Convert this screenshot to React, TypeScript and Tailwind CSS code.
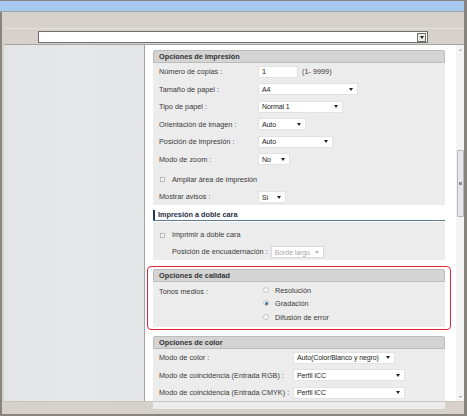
import React from "react";

function Arrow({ light }: { light?: boolean }) {
  return (
    <svg width="4" height="3" viewBox="0 0 4 3" className="shrink-0">
      <path d="M0 0h4L2 3z" fill={light ? "#b8b8b8" : "#222"} />
    </svg>
  );
}

function Select({ w, text, disabled }: { w: string; text: string; disabled?: boolean }) {
  return (
    <div
      className={`${w} h-[12px] bg-white border flex items-center justify-between pl-[3px] pr-[4px] text-[7px] tracking-[-0.1px] ${
        disabled ? "border-[#d8d8d8] text-[#a8a8a8]" : "border-[#e2e2e2] text-[#222]"
      }`}
    >
      <span className="whitespace-nowrap">{text}</span>
      <Arrow light={disabled} />
    </div>
  );
}

function Checkbox() {
  return <span className="w-[5px] h-[5px] border border-[#b9b9b9] bg-[#f4f4f4] shrink-0" />;
}

function Radio({ checked }: { checked?: boolean }) {
  return (
    <span className="w-[6px] h-[6px] rounded-full border border-[#c4c4c4] bg-[#f6f6f6] flex items-center justify-center shrink-0">
      {checked && <span className="w-[3px] h-[3px] rounded-full bg-[#3c6a96]" />}
    </span>
  );
}

function PanelHeader({ title }: { title: string }) {
  return (
    <div className="h-[13px] bg-[#d4d4d4] border border-[#bcbcbc] rounded-t-[2px] flex items-center pl-[5px] font-bold text-[#333]">
      {title}
    </div>
  );
}

function Row({ label, h, children, lw = "w-[99px]" }: { label: string; h: string; children?: React.ReactNode; lw?: string }) {
  return (
    <div className={`${h} flex items-center`}>
      <span className={`${lw} shrink-0 whitespace-nowrap`}>{label}</span>
      {children}
    </div>
  );
}

export default function App() {
  return (
    <div
      className="w-[467px] h-[416px] flex flex-col bg-[#d6d2cb] border-l-2 border-r-[3px] border-t border-b-2 border-[#87847f] text-[7.3px] leading-none text-[#3a3a3a]"
      style={{ fontFamily: '"Liberation Sans", Arial, sans-serif' }}
    >
      {/* title strip */}
      <div className="h-[11px] bg-[#a9caf0] border-b border-[#9aa3ad] ml-[-2px]" />

      {/* toolbar */}
      <div className="h-[32px] pl-[2px] flex flex-col">
        <div className="h-[17px] border-b border-[#e3e0da]" />
        <div className="ml-[34px] mt-[2px] w-[390px] h-[12px] bg-white border border-[#6f6f6f] flex items-center justify-end pr-[1px]">
          <div className="w-[9px] h-[9px] border border-[#6f6f6f] bg-[#ece9e4] flex items-center justify-center">
            <Arrow />
          </div>
        </div>
      </div>

      {/* main */}
      <div className="h-[357px] ml-[2px] flex border-t border-[#a7a4a0]">
        <div className="w-[141px] bg-gradient-to-r from-[#e2e4e6] via-[#e6e7e9] to-[#e3e5e7] border-r border-[#a3a3a3]" />

        <div className="flex-1 bg-white flex">
          <div className="w-[292px] ml-[8px] pt-[5px]">
            {/* Opciones de impresión */}
            <PanelHeader title="Opciones de impresión" />
            <div className="bg-[#ececec] pl-[6px] pb-[2px]">
              <Row label="Número de copias :" h="h-[17.5px]">
                <div className="w-[40px] h-[12px] bg-white border border-[#e2e2e2] pl-[3px] flex items-center text-[#222]">1</div>
                <span className="ml-[4px]">(1- 9999)</span>
              </Row>
              <Row label="Tamaño de papel :" h="h-[17.5px]">
                <Select w="w-[100px]" text="A4" />
              </Row>
              <Row label="Tipo de papel :" h="h-[17.5px]">
                <Select w="w-[85px]" text="Normal 1" />
              </Row>
              <Row label="Orientación de imagen :" h="h-[17.5px]">
                <Select w="w-[48px]" text="Auto" />
              </Row>
              <Row label="Posición de impresión :" h="h-[17.5px]">
                <Select w="w-[75px]" text="Auto" />
              </Row>
              <Row label="Modo de zoom :" h="h-[17.5px]">
                <Select w="w-[32px]" text="No" />
              </Row>
              <div className="h-[23px] flex items-center pl-[1px] gap-[7px]">
                <Checkbox />
                <span>Ampliar área de impresión</span>
              </div>
              <Row label="Mostrar avisos :" h="h-[12px]">
                <Select w="w-[28px]" text="Sí" />
              </Row>
            </div>

            {/* Impresión a doble cara */}
            <div className="mt-[4px] h-[12px] flex items-center border-b border-[#5d7a90]">
              <span className="w-[2px] h-[10px] bg-[#1e3b66] mr-[3px]" />
              <span className="font-bold text-[#1f2f45]">Impresión a doble cara</span>
            </div>
            <div className="mt-[1px] bg-[#ececec] pl-[7px] pt-[5px] h-[38px]">
              <div className="h-[16px] flex items-center gap-[7px]">
                <Checkbox />
                <span>Imprimir a doble cara</span>
              </div>
              <div className="h-[18px] flex items-center pl-[12px]">
                <span className="mr-[3px]">Posición de encuadernación :</span>
                <Select w="w-[53px]" text="Borde largo" disabled />
              </div>
            </div>

            {/* Opciones de calidad (highlighted) */}
            <div className="mt-[6px] -mx-[6px] px-[5px] pt-[2px] pb-[2px] border border-[#e2263a] rounded-[4px]">
              <PanelHeader title="Opciones de calidad" />
              <div className="bg-[#ececec] h-[45px] pl-[6px] pt-[5px] flex">
                <span className="w-[104px] shrink-0 mt-[1px]">Tonos medios :</span>
                <div className="flex flex-col">
                  <div className="h-[13.5px] flex items-start gap-[6px]">
                    <Radio />
                    <span>Resolución</span>
                  </div>
                  <div className="h-[13.5px] flex items-start gap-[6px]">
                    <Radio checked />
                    <span>Gradación</span>
                  </div>
                  <div className="h-[13.5px] flex items-start gap-[6px]">
                    <Radio />
                    <span>Difusión de error</span>
                  </div>
                </div>
              </div>
            </div>

            {/* Opciones de color */}
            <div className="mt-[6px]">
              <PanelHeader title="Opciones de color" />
              <div className="bg-[#ececec] pl-[6px] h-[60px]">
                <Row label="Modo de color :" h="h-[17.5px]" lw="w-[134px]">
                  <Select w="w-[102px]" text="Auto(Color/Blanco y negro)" />
                </Row>
                <Row label="Modo de coincidencia (Entrada RGB) :" h="h-[17.5px]" lw="w-[134px]">
                  <Select w="w-[112px]" text="Perfil ICC" />
                </Row>
                <Row label="Modo de coincidencia (Entrada CMYK) :" h="h-[17.5px]" lw="w-[134px]">
                  <Select w="w-[112px]" text="Perfil ICC" />
                </Row>
              </div>
            </div>
          </div>

          {/* scrollbar */}
          <div className="ml-auto w-[8px] bg-[#f3f3f3] flex flex-col items-center">
            <div className="h-[9px] flex items-center justify-center">
              <svg width="3" height="2" viewBox="0 0 3 2">
                <path d="M0 2h3L1.5 0z" fill="#b0b0b0" />
              </svg>
            </div>
            <div className="mt-[96px] w-[7px] h-[67px] bg-[#e6e6ea] border border-[#b6b6bc] rounded-[1px] flex items-center justify-center">
              <span className="w-[3px] h-[3px] bg-[#8a8a90]" />
            </div>
            <div className="mt-auto h-[9px] flex items-center justify-center">
              <svg width="3" height="2" viewBox="0 0 3 2">
                <path d="M0 0h3L1.5 2z" fill="#999" />
              </svg>
            </div>
          </div>
        </div>
      </div>

      {/* bottom strip */}
      <div className="flex-1 border-t border-[#c9c5be]" />
    </div>
  );
}
